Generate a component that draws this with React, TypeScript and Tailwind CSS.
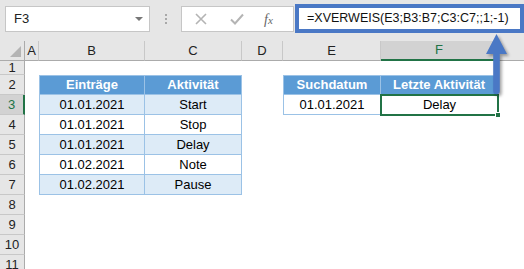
import type { ReactNode } from "react"

const cols = "grid-cols-[25px_14px_106px_97px_41px_98px_117px_1fr]"

function ColHead({ label, active }: { label: string; active?: boolean }) {
  return (
    <div
      className={
        "flex items-center justify-center border-r border-[#c8c8c8] border-b " +
        (active
          ? "bg-[#d2d2d2] text-[#217346] border-b-2 border-b-[#217346]"
          : "bg-[#e6e6e6] text-[#222] border-b-[#ababab]")
      }
    >
      {label}
    </div>
  )
}

function RowHead({ n, active }: { n: number; active?: boolean }) {
  return (
    <div
      className={
        "flex items-center justify-center border-b border-[#c8c8c8] " +
        (active
          ? "bg-[#d2d2d2] text-[#217346] border-r-2 border-r-[#217346]"
          : "bg-[#e6e6e6] text-[#222] border-r border-r-[#ababab]")
      }
    >
      {n}
    </div>
  )
}

function Cell({ className = "", children }: { className?: string; children?: ReactNode }) {
  return <div className={"relative flex items-center justify-center " + className}>{children}</div>
}

const entries = [
  ["01.01.2021", "Start"],
  ["01.01.2021", "Stop"],
  ["01.01.2021", "Delay"],
  ["01.02.2021", "Note"],
  ["01.02.2021", "Pause"],
]

export default function App() {
  return (
    <div className="relative w-[524px] h-[269px] overflow-hidden bg-white text-[13px] text-black font-['Liberation_Sans',Arial,sans-serif]">
      {/* toolbar */}
      <div className="h-[41px] bg-[#e6e6e6] flex items-start pt-[6px]">
        <div className="ml-[5px] w-[145px] h-[26px] bg-white border border-[#c6c6c6] flex items-center pl-[8px] pr-[6px]">
          <span className="flex-1 text-[#222]">F3</span>
          <span className="w-0 h-0 border-l-[4px] border-r-[4px] border-t-[4px] border-l-transparent border-r-transparent border-t-[#777]" />
        </div>
        <div className="w-[31px] h-[26px] flex flex-col items-center justify-center gap-[2px]">
          <span className="w-[2px] h-[2px] bg-[#a8a8a8]" />
          <span className="w-[2px] h-[2px] bg-[#a8a8a8]" />
          <span className="w-[2px] h-[2px] bg-[#a8a8a8]" />
        </div>
        <div className="w-[113px] h-[26px] bg-white border border-[#c6c6c6] flex items-center">
          <svg width="12" height="12" viewBox="0 0 12 12" className="ml-[13px]">
            <path d="M1 1L11 11M11 1L1 11" stroke="#b4b4b4" strokeWidth="1.6" />
          </svg>
          <svg width="14" height="12" viewBox="0 0 14 12" className="ml-[23px]">
            <path d="M1 6.5L5 10.5L13 1.5" stroke="#b4b4b4" strokeWidth="2" fill="none" />
          </svg>
          <span className="ml-[20px] italic text-[14px] text-[#666] font-['Liberation_Serif',serif]">
            f<span className="text-[11px]">x</span>
          </span>
        </div>
        <div className="-mt-[2px] ml-[1px] w-[229px] h-[29px] bg-white border-4 border-[#4a78c5] flex items-center pl-[8px] text-[12.5px] text-[#111]">
          =XVERWEIS(E3;B3:B7;C3:C7;;1;-1)
        </div>
      </div>

      {/* sheet */}
      <div className={"grid " + cols + " grid-rows-[20px_14px_repeat(9,20px)]"}>
        <div className="bg-[#e6e6e6] border-r border-b border-[#ababab] flex items-end justify-end pr-[3px] pb-[3px]">
          <span className="w-0 h-0 [border-right:0] [border-top:0] [border-bottom:11px_solid_#b4b4b4] [border-left:11px_solid_transparent]" />
        </div>
        <ColHead label="A" />
        <ColHead label="B" />
        <ColHead label="C" />
        <ColHead label="D" />
        <ColHead label="E" />
        <ColHead label="F" active />
        <div className="bg-[#e6e6e6] border-b border-[#ababab]" />

        {/* row 1 */}
        <RowHead n={1} />
        <Cell className="col-span-7" />

        {/* row 2 */}
        <RowHead n={2} />
        <Cell />
        <Cell className="bg-[#5b9bd5] text-white font-bold border-l border-t border-r border-b border-[#9bc2e6]">Einträge</Cell>
        <Cell className="bg-[#5b9bd5] text-white font-bold border-t border-r border-b border-[#9bc2e6]">Aktivität</Cell>
        <Cell />
        <Cell className="bg-[#5b9bd5] text-white font-bold border-l border-t border-r border-b border-[#9bc2e6]">Suchdatum</Cell>
        <Cell className="bg-[#5b9bd5] text-white font-bold border-t border-r border-b border-[#9bc2e6]">Letzte Aktivität</Cell>
        <Cell />

        {entries.map(([d, a], i) => {
          const bg = i % 2 === 0 ? "bg-[#ddebf7]" : "bg-white"
          return [
            <RowHead key={"h" + i} n={i + 3} active={i === 0} />,
            <Cell key={"a" + i} />,
            <Cell key={"b" + i} className={bg + " border-l border-r border-b border-[#9bc2e6]"}>{d}</Cell>,
            <Cell key={"c" + i} className={bg + " border-r border-b border-[#9bc2e6]"}>{a}</Cell>,
            <Cell key={"d" + i} />,
            i === 0 ? (
              <Cell key={"e" + i} className="bg-white border-l border-r border-b border-[#9bc2e6]">01.01.2021</Cell>
            ) : (
              <Cell key={"e" + i} />
            ),
            i === 0 ? (
              <Cell key={"f" + i} className="bg-white">
                Delay
                <span className="absolute -left-[1px] -top-[1px] -right-[1px] -bottom-[1px] border-2 border-[#217346]" />
                <span className="absolute -right-[3px] -bottom-[3px] w-[6px] h-[6px] bg-[#217346] border border-white" />
              </Cell>
            ) : (
              <Cell key={"f" + i} />
            ),
            <Cell key={"g" + i} />,
          ]
        })}

        {[8, 9, 10, 11].map((n) => [
          <RowHead key={"r" + n} n={n} />,
          <Cell key={"x" + n} className="col-span-7" />,
        ])}
      </div>

      {/* callout arrow */}
      <svg
        width="26"
        height="66"
        viewBox="0 0 26 66"
        className="absolute left-[484px] top-[32px] [filter:drop-shadow(2px_2px_1.5px_rgba(0,0,0,0.35))]"
      >
        <path
          d="M12.5 2 L23 22 L15.8 22 L15.8 59 A3.3 3.3 0 0 1 9.2 59 L9.2 22 L2 22 Z"
          fill="#4a78c5"
        />
      </svg>
    </div>
  )
}
